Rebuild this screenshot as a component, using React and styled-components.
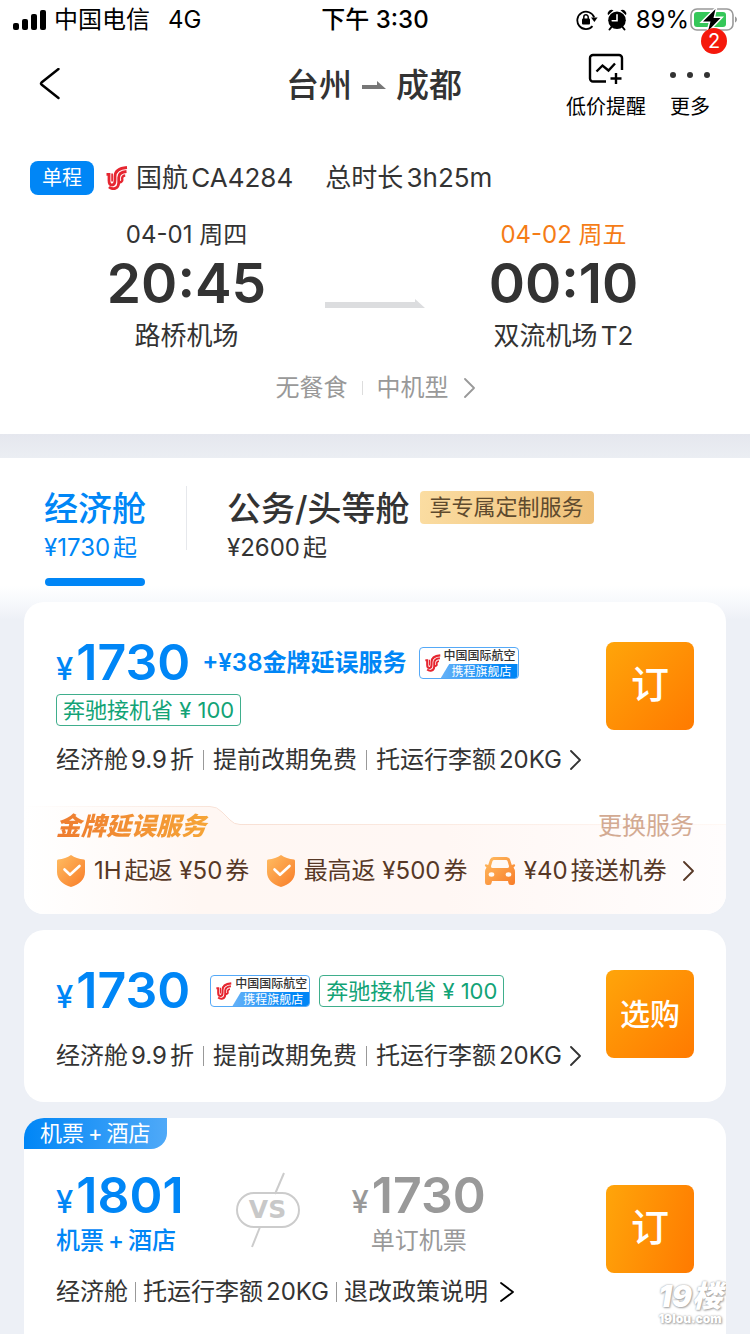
import React from 'react';
import styled, { createGlobalStyle, css } from 'styled-components';

const GlobalStyle = createGlobalStyle`
  * {
    box-sizing: border-box;
  }
  body {
    margin: 0;
    background: #edf0f6;
    color: #333;
    font-family: Inter, 'Noto Sans CJK SC', sans-serif;
    font-size: 24px;
    text-autospace: normal;
  }
  button {
    margin: 0;
    padding: 0;
    border: 0;
    background: none;
    color: inherit;
    font: inherit;
    text-autospace: inherit;
    white-space: nowrap;
    cursor: pointer;
  }
  svg {
    display: block;
    flex: none;
  }
`;

const Page = styled.div`
  display: flex;
  flex-direction: column;
  min-height: 100vh;
  overflow: hidden;
  white-space: nowrap;
`;

/* status bar */

const StatusBar = styled.div`
  display: grid;
  grid-template-columns: 1fr auto 1fr;
  align-items: center;
  height: 40px;
  padding: 0 12px;
  background: #fff;
  color: #000;
  line-height: 40px;
`;

const StatusGroup = styled.div`
  display: flex;
  align-items: center;
  gap: ${props => props.$gap}px;
  justify-content: ${props => (props.$end ? 'flex-end' : 'flex-start')};
`;

const Carrier = styled.span`
  margin-right: 10px;
`;

const Clock = styled.span`
  font-weight: 500;
`;

/* header */

const Header = styled.header`
  background: #fff;
  padding-bottom: 30px;
`;

const NavBar = styled.nav`
  display: grid;
  grid-template-columns: 1fr auto 1fr;
  align-items: center;
  height: 90px;
  padding: 0 40px 0 38px;
`;

const BackButton = styled.button`
  justify-self: start;
  color: #000;
`;

const Title = styled.h1`
  display: flex;
  align-items: center;
  gap: 10px;
  margin: 0;
  font-size: 33px;
  font-weight: 500;
  line-height: 44px;
`;

const Actions = styled.div`
  display: flex;
  align-items: flex-start;
  justify-self: end;
  gap: 24px;
  padding-top: 4px;
`;

const Action = styled.button`
  position: relative;
  display: flex;
  flex-direction: column;
  align-items: center;
  color: #000;
  font-size: 20px;
  line-height: 32px;
`;

const ActionIcon = styled.span`
  display: flex;
  align-items: ${props => (props.$low ? 'flex-end' : 'center')};
  height: 40px;
  padding-bottom: ${props => (props.$low ? 12 : 4)}px;
`;

const CountBadge = styled.span`
  position: absolute;
  top: -23px;
  left: 31px;
  width: 26px;
  border-radius: 13px;
  background: #f5190c;
  color: #fff;
  line-height: 26px;
  text-align: center;
`;

const FlightRow = styled.div`
  display: flex;
  align-items: center;
  margin-top: 30px;
  padding: 0 30px;
  font-size: 26px;
  line-height: 36px;
`;

const TripTag = styled.span`
  margin-right: 12px;
  padding: 0 12px;
  border-radius: 8px;
  background: #0086f6;
  color: #fff;
  font-size: 20px;
  line-height: 34px;
`;

const FlightNo = styled.span`
  margin: 0 32px 0 8px;
`;

const Route = styled.div`
  display: grid;
  grid-template-columns: 1fr 100px 1fr;
  margin-top: 23px;
  padding: 0 48px;
`;

const RouteArrow = styled.div`
  display: flex;
  align-items: flex-end;
  height: 89px;
`;

const Stop = styled.div`
  display: flex;
  flex-direction: column;
  align-items: center;
`;

const StopDate = styled.span`
  color: ${props => (props.$nextDay ? '#f57c16' : '#333')};
  font-size: 24px;
  line-height: 32px;
`;

const StopTime = styled.span`
  font-size: 55px;
  font-weight: 600;
  line-height: 64px;
`;

const StopAirport = styled.span`
  font-size: 26px;
  line-height: 42px;
`;

const PlaneInfo = styled.button`
  display: flex;
  align-items: center;
  margin: 15px auto 0;
  color: #999;
  line-height: 32px;
`;

const Divider = styled.span`
  flex: none;
  width: 1px;
  height: ${props => props.$height || 20}px;
  margin: 0 ${props => props.$gap}px;
  background: ${props => props.$color || '#999'};
`;

const Strip = styled.div`
  height: 24px;
  background: linear-gradient(#e5e7ee, #ebeef3);
`;

/* cabin tabs */

const Tabs = styled.div`
  display: flex;
  padding: 28px 44px 0;
  height: 144px;
  background: linear-gradient(#fff 128px, #f7f9fc 144px);
`;

const Tab = styled.button`
  display: flex;
  flex-direction: column;
  align-items: flex-start;
  color: ${props => (props.$active ? '#0086f6' : '#333')};
`;

const TabTitle = styled.span`
  display: flex;
  align-items: center;
  gap: 10px;
  font-size: 34px;
  font-weight: 500;
  line-height: 46px;
`;

const TabPrice = styled.span`
  line-height: 32px;
`;

const TabLine = styled.span`
  align-self: center;
  width: 100px;
  height: 8px;
  margin-top: 14px;
  border-radius: 4px;
  background: #0086f6;
`;

const PerkTag = styled.span`
  margin-bottom: 4px;
  padding: 0 10px;
  border-radius: 4px;
  background: linear-gradient(100deg, #fbdda2, #efc078);
  color: #5e4a2e;
  font-size: 22px;
  font-weight: 400;
  line-height: 33px;
`;

/* fare cards */

const Fares = styled.main`
  display: flex;
  flex: 1;
  flex-direction: column;
  gap: 16px;
  padding: 0 24px;
  background: linear-gradient(#f7f9fc, #edf0f6 18px);
`;

const Card = styled.section`
  position: relative;
  border-radius: 20px;
  background: #fff;
  overflow: hidden;
  ${props =>
    props.$last &&
    css`
      flex: 1;
      border-radius: 20px 20px 0 0;
    `}
`;

const CardBody = styled.div`
  display: flex;
  justify-content: space-between;
  align-items: flex-start;
  padding: ${props => props.$top}px 32px ${props => props.$bottom}px;
`;

const FareInfo = styled.div`
  display: flex;
  flex-direction: column;
  align-items: flex-start;
`;

const PriceRow = styled.div`
  display: flex;
  align-items: center;
  height: 50px;
`;

const Price = styled.span`
  display: flex;
  align-items: baseline;
  gap: 3px;
  height: 54px;
  padding-top: 1px;
  color: ${props => (props.$muted ? '#999' : '#0086f6')};
  font-size: 50px;
  font-weight: 600;
  line-height: 50px;
`;

const Yen = styled.small`
  font-size: 31px;
  font-weight: 500;
`;

const AddOn = styled.span`
  margin: 0 12px;
  color: #0086f6;
  font-weight: 600;
  line-height: 32px;
  text-autospace: no-autospace;
`;

const TagRow = styled.div`
  display: flex;
  align-items: center;
  gap: 9px;
  margin: ${props => (props.$inline ? '0 0 0 20px' : '6px 0 0')};
`;

const SaveTag = styled.span`
  padding: 0 6px;
  border: 1px solid #3fae8c;
  border-radius: 4px;
  color: #12a376;
  font-size: 22px;
  line-height: 30px;
`;

const Details = styled.button`
  display: flex;
  align-items: center;
  margin-top: ${props => props.$top}px;
  line-height: 34px;
`;

const ChevronSlot = styled.span`
  margin-left: ${props => props.$gap}px;
`;

const BookButton = styled.button`
  width: 88px;
  height: 88px;
  margin-top: ${props => props.$top || 4}px;
  padding-bottom: ${props => (props.$small ? 0 : 4)}px;
  border-radius: 8px;
  background: linear-gradient(${props => props.$angle || 135}deg, #ffa50a, #ff7a00);
  color: #fff;
  font-size: ${props => (props.$small ? 30 : 38)}px;
  font-weight: 500;
  line-height: 84px;
`;

/* airline store badge */

const StoreBox = styled.span`
  display: flex;
  align-items: center;
  justify-content: space-between;
  width: 100px;
  height: 32px;
  padding: 0 2px 0 5px;
  border: 1px solid #55a9f7;
  border-radius: 4px;
  overflow: hidden;
`;

const StoreNames = styled.span`
  display: flex;
  flex-direction: column;
  align-items: flex-end;
  font-size: 12px;
  font-weight: 500;
  line-height: 16px;
`;

const StoreShop = styled.span`
  width: 77px;
  margin-right: -2px;
  padding-right: 6px;
  background: linear-gradient(90deg, #66b2f8, #0086f6 80%);
  clip-path: polygon(9px 0, 100% 0, 100% 100%, 0 100%);
  color: #fff;
  font-weight: 400;
  line-height: 15px;
  text-align: right;
`;

/* delay service */

const Service = styled.div`
  position: relative;
  height: 108px;
  padding: 4px 32px 0;
`;

const ServiceShape = styled.svg`
  position: absolute;
  top: 0;
  left: 0;
  width: 100%;
  height: 108px;
`;

const ServiceHead = styled.div`
  position: relative;
  display: flex;
  align-items: center;
  justify-content: space-between;
  height: 32px;
`;

const ServiceName = styled.h2`
  margin: 0;
  padding-right: 6px;
  background: linear-gradient(90deg, #ee7c30, #f6a637);
  background-clip: text;
  color: transparent;
  font-size: 25px;
  font-style: italic;
  font-weight: 900;
  line-height: 32px;
`;

const ChangeButton = styled.button`
  color: #d3aa92;
  line-height: 32px;
`;

const ServiceItems = styled.button`
  position: relative;
  display: flex;
  align-items: center;
  justify-content: space-between;
  width: 100%;
  margin-top: 12px;
  color: #573826;
  line-height: 34px;
`;

const ServiceItem = styled.span`
  display: flex;
  align-items: center;
  gap: 8px;
`;

/* hotel bundle */

const Ribbon = styled.span`
  display: block;
  width: fit-content;
  padding: 0 16px;
  border-bottom-right-radius: 16px;
  background: linear-gradient(90deg, #0086f6, #4fa9f8);
  color: #fff;
  font-size: 22px;
  line-height: 31px;
`;

const BundleName = styled.span`
  display: flex;
  gap: 4px;
`;

const Compare = styled.div`
  display: flex;
  align-items: center;
`;

const Option = styled.div`
  display: flex;
  flex-direction: column;
  align-items: ${props => (props.$muted ? 'center' : 'flex-start')};
`;

const OptionName = styled.span`
  margin-top: 2px;
  color: ${props => (props.$muted ? '#999' : '#0086f6')};
  font-weight: ${props => (props.$muted ? 400 : 500)};
  line-height: 32px;
`;

const Versus = styled.div`
  position: relative;
  width: 64px;
  margin: 0 52px 6px;
  border: 2px solid #ccc;
  border-radius: 18px;
  color: #c8c8c8;
  font-family: 'DejaVu Sans', sans-serif;
  font-size: 25px;
  font-weight: 700;
  line-height: 32px;
  text-align: center;
`;

const Slash = styled.svg`
  position: absolute;
  top: -22px;
  left: 10px;
`;

const Watermark = styled.div`
  position: absolute;
  right: 4px;
  bottom: 8px;
  display: flex;
  flex-direction: column;
  align-items: center;
  color: #fff;
  font-weight: 900;
  text-shadow: 0 0 2px #999, 1px 1px 2px #aaa;
  text-autospace: no-autospace;
`;

const WatermarkTop = styled.span`
  font-size: 30px;
  font-style: italic;
  line-height: 30px;
`;

const WatermarkUrl = styled.span`
  font-size: 12px;
  line-height: 16px;
`;

/* icons */

const Chevron = ({ width = 11, color = 'currentColor' }) => (
  <svg width={width} height="20" viewBox={`0 0 ${width} 20`} fill="none">
    <path
      d={`M1 1L${width - 1} 10L1 19`}
      stroke={color}
      strokeWidth="1.8"
      strokeLinecap="round"
      strokeLinejoin="round"
    />
  </svg>
);

const SignalIcon = () => (
  <svg width="34" height="22" viewBox="0 0 34 22">
    <rect x="1" y="14" width="6" height="7" rx="2" />
    <rect x="10" y="10" width="6" height="11" rx="2" />
    <rect x="19" y="5" width="6" height="16" rx="2" />
    <rect x="28" y="1" width="6" height="20" rx="2" />
  </svg>
);

const LockIcon = () => (
  <svg width="22" height="22" viewBox="0 0 22 22" fill="none" stroke="#000">
    <path d="M16.5 17.2A8.7 8.7 0 1 1 18.2 8.4" strokeWidth="1.8" />
    <path d="M15 8.5H21.6L18.4 13Z" fill="#000" stroke="none" />
    <rect x="6" y="9.5" width="8" height="6" rx="1" fill="#000" stroke="none" />
    <path d="M7.8 10V8a2.2 2.2 0 0 1 4.4 0V10" strokeWidth="1.5" />
  </svg>
);

const AlarmIcon = () => (
  <svg width="20" height="22" viewBox="0 0 20 22" fill="#000">
    <path d="M1 6.2A4 4 0 0 1 6.5 1.2ZM19 6.2A4 4 0 0 0 13.5 1.2Z" />
    <circle cx="10" cy="11.3" r="8.8" />
    <path d="M4.5 18L2.5 20.5M15.5 18L17.5 20.5" stroke="#000" strokeWidth="2" strokeLinecap="round" />
    <path d="M10 5.8V11.8H5.2" fill="none" stroke="#fff" strokeWidth="1.6" strokeLinecap="round" />
  </svg>
);

const BatteryIcon = () => (
  <svg width="48" height="26" viewBox="0 0 48 26">
    <rect x="1" y="2" width="42" height="21" rx="6" fill="none" stroke="#999" strokeWidth="1.6" />
    <rect x="4" y="5" width="32" height="15" rx="3" fill="#35c759" />
    <path d="M45 9.5C47.6 10.4 47.6 14.6 45 15.5Z" fill="#999" />
    <path
      d="M25.5 2L13 14.5H20.5L18 24L30.5 11H23.5Z"
      fill="#000"
      stroke="#fff"
      strokeWidth="3"
      paintOrder="stroke"
    />
  </svg>
);

const TrendIcon = () => (
  <svg width="36" height="32" viewBox="0 0 36 32" fill="none" stroke="#000" strokeWidth="2.4">
    <path d="M18 28.5H5A3 3 0 0 1 2 25.5V5A3 3 0 0 1 5 2H31A3 3 0 0 1 34 5V17" />
    <path d="M8.5 18.5L14.5 12.5L20.5 17.5L27 10.5" />
    <path d="M28 20V31M22.5 25.5H33.5" />
  </svg>
);

const DotsIcon = () => (
  <svg width="40" height="8" viewBox="0 0 40 8" fill="#333">
    <circle cx="3" cy="4" r="3" />
    <circle cx="20" cy="4" r="3" />
    <circle cx="37" cy="4" r="3" />
  </svg>
);

const PhoenixLogo = ({ size = 22 }) => (
  <svg width={size} height={size + 2} viewBox="0 0 22 24" fill="none" stroke="#e62630">
    <path
      d="M0.5 8.3H3V14.5C3 17.5 4.2 19 6 19C8.5 19 9 16.5 9 14V10.5C9 5 12.5 2.2 21 1.5"
      strokeWidth="2.8"
    />
    <path d="M6.1 7.5V15.5" strokeWidth="1.7" />
    <path d="M3 21C6.5 24 12.5 23 12.7 17V11.5C12.7 7.8 15 6 20.5 5.5" strokeWidth="2.8" />
    <path d="M13 15.5C14.5 17 16.8 15.5 16.3 13.5C15.8 11.5 16.5 9.8 19.2 9.5" strokeWidth="2.4" />
  </svg>
);

const ShieldIcon = () => (
  <svg width="30" height="34" viewBox="0 0 30 34">
    <defs>
      <linearGradient id="shield" x1="0" y1="0" x2="1" y2="1">
        <stop offset="0" stopColor="#ffbd62" />
        <stop offset="1" stopColor="#f87c28" />
      </linearGradient>
    </defs>
    <path
      d="M15 1C18.5 3.5 23 5 28 5.5Q29 5.7 29 7V18C29 25.5 23 30.5 15 33C7 30.5 1 25.5 1 18V7Q1 5.7 2 5.5C7 5 11.5 3.5 15 1Z"
      fill="url(#shield)"
    />
    <path
      d="M8.5 15.5L14 20.8L23.5 12"
      fill="none"
      stroke="#fff"
      strokeWidth="2.6"
      strokeLinecap="round"
      strokeLinejoin="round"
    />
  </svg>
);

const CarIcon = () => (
  <svg width="32" height="30" viewBox="0 0 32 30">
    <path
      d="M9.5 1H22.5Q25 1 26 3.5L27.8 9L30 8.3Q31.5 8.5 31 10L29.5 11.5Q31 13.5 31 16V26Q31 29 28.5 29H27Q24.5 29 24.3 26.5L24 25H8L7.7 26.5Q7.5 29 5 29H3.5Q1 29 1 26V16Q1 13.5 2.5 11.5L1 10Q0.5 8.5 2 8.3L4.2 9L6 3.5Q7 1 9.5 1Z"
      fill="url(#shield)"
    />
    <path d="M10 4H22Q23 4 23.5 5L25 10Q25.3 12 23.5 12H8.5Q6.7 12 7 10L8.5 5Q9 4 10 4Z" fill="#fff9f5" />
    <ellipse cx="7.5" cy="18.5" rx="2.8" ry="2.2" fill="#fff9f5" />
    <ellipse cx="24.5" cy="18.5" rx="2.8" ry="2.2" fill="#fff9f5" />
  </svg>
);

const StoreBadge = () => (
  <StoreBox>
    <PhoenixLogo size={16} />
    <StoreNames>
      <span>中国国际航空</span>
      <StoreShop>携程旗舰店</StoreShop>
    </StoreNames>
  </StoreBox>
);

const FarePrice = ({ amount, muted }) => (
  <Price $muted={muted}>
    <Yen>¥</Yen>
    {amount}
  </Price>
);

const HotelBundle = () => (
  <BundleName>
    <span>机票</span>
    <span>+</span>
    <span>酒店</span>
  </BundleName>
);

const FareDetails = ({ items, top, gap = 9, children }) => (
  <Details type="button" $top={top}>
    {items.map((item, i) => (
      <React.Fragment key={item}>
        {i > 0 && <Divider $gap={gap} />}
        <span>{item}</span>
      </React.Fragment>
    ))}
    {children}
  </Details>
);

const economyDetails = ['经济舱9.9折', '提前改期免费', '托运行李额20KG'];
const bundleDetails = ['经济舱', '托运行李额20KG', '退改政策说明'];

const App = () => (
  <Page>
    <GlobalStyle />
    <StatusBar>
      <StatusGroup $gap={8}>
        <SignalIcon />
        <Carrier>中国电信</Carrier>
        <span>4G</span>
      </StatusGroup>
      <Clock>下午 3:30</Clock>
      <StatusGroup $gap={9} $end>
        <LockIcon />
        <AlarmIcon />
        <StatusGroup $gap={1}>
          <span>89%</span>
          <BatteryIcon />
        </StatusGroup>
      </StatusGroup>
    </StatusBar>

    <Header>
      <NavBar>
        <BackButton type="button" aria-label="返回">
          <svg width="22" height="34" viewBox="0 0 22 34" fill="none">
            <path
              d="M20.5 1L3.5 14.5Q2.5 15.5 3.5 16.5L20.5 30"
              stroke="#000"
              strokeWidth="2.4"
              strokeLinecap="round"
            />
          </svg>
        </BackButton>
        <Title>
          台州
          <svg width="24" height="8" viewBox="0 0 24 8" fill="#777">
            <path d="M0 4H15V0L24 8H0Z" />
          </svg>
          成都
        </Title>
        <Actions>
          <Action type="button">
            <ActionIcon>
              <TrendIcon />
            </ActionIcon>
            低价提醒
          </Action>
          <Action type="button">
            <ActionIcon $low>
              <DotsIcon />
            </ActionIcon>
            更多
            <CountBadge>2</CountBadge>
          </Action>
        </Actions>
      </NavBar>

      <FlightRow>
        <TripTag>单程</TripTag>
        <PhoenixLogo />
        <FlightNo>国航CA4284</FlightNo>
        <span>总时长3h25m</span>
      </FlightRow>

      <Route>
        <Stop>
          <StopDate>04-01 周四</StopDate>
          <StopTime>20:45</StopTime>
          <StopAirport>路桥机场</StopAirport>
        </Stop>
        <RouteArrow>
          <svg width="100" height="9" viewBox="0 0 100 9" fill="#dcdddf">
            <path d="M0 3H90V0L100 9H0Z" />
          </svg>
        </RouteArrow>
        <Stop>
          <StopDate $nextDay>04-02 周五</StopDate>
          <StopTime>00:10</StopTime>
          <StopAirport>双流机场T2</StopAirport>
        </Stop>
      </Route>

      <PlaneInfo type="button">
        无餐食
        <Divider $height={14} $gap={14} $color="#ddd" />
        中机型
        <ChevronSlot $gap={15}>
          <Chevron />
        </ChevronSlot>
      </PlaneInfo>
    </Header>

    <Strip />

    <Tabs role="tablist">
      <Tab type="button" role="tab" aria-selected="true" $active>
        <TabTitle>经济舱</TabTitle>
        <TabPrice>¥1730起</TabPrice>
        <TabLine />
      </Tab>
      <Divider $height={64} $gap={40} $color="#e6e8ec" />
      <Tab type="button" role="tab" aria-selected="false">
        <TabTitle>
          公务/头等舱
          <PerkTag>享专属定制服务</PerkTag>
        </TabTitle>
        <TabPrice>¥2600起</TabPrice>
      </Tab>
    </Tabs>

    <Fares>
      <Card>
        <CardBody $top={36} $bottom={29}>
          <FareInfo>
            <PriceRow>
              <FarePrice amount="1730" />
              <AddOn>+¥38金牌延误服务</AddOn>
              <StoreBadge />
            </PriceRow>
            <TagRow>
              <SaveTag>奔驰接机省 ¥ 100</SaveTag>
            </TagRow>
            <FareDetails items={economyDetails} top={17}>
              <ChevronSlot $gap={8}>
                <Chevron />
              </ChevronSlot>
            </FareDetails>
          </FareInfo>
          <BookButton type="button">订</BookButton>
        </CardBody>
        <Service>
          <ServiceShape viewBox="0 0 702 108" preserveAspectRatio="none">
            <defs>
              <linearGradient id="serviceFill" x1="0" y1="0" x2="1" y2="0">
                <stop offset="0" stopColor="#fff" />
                <stop offset="0.25" stopColor="#fff7f3" />
                <stop offset="0.6" stopColor="#fff7f4" />
                <stop offset="1" stopColor="#fffdfd" />
              </linearGradient>
              <linearGradient id="serviceLine" x1="0" y1="0" x2="1" y2="0">
                <stop offset="0" stopColor="#fff" />
                <stop offset="0.3" stopColor="#f8e0d4" />
                <stop offset="1" stopColor="#fff8f4" />
              </linearGradient>
            </defs>
            <path d="M0 0.5H186Q193 0.5 198 6L206 14Q210 18.5 216 18.5H702V108H0Z" fill="url(#serviceFill)" />
            <path
              d="M0 0.5H186Q193 0.5 198 6L206 14Q210 18.5 216 18.5L702 18.6"
              fill="none"
              stroke="url(#serviceLine)"
            />
          </ServiceShape>
          <ServiceHead>
            <ServiceName>金牌延误服务</ServiceName>
            <ChangeButton type="button">更换服务</ChangeButton>
          </ServiceHead>
          <ServiceItems type="button">
            <ServiceItem>
              <ShieldIcon />
              1H起返 ¥50券
            </ServiceItem>
            <ServiceItem>
              <ShieldIcon />
              最高返 ¥500券
            </ServiceItem>
            <ServiceItem>
              <CarIcon />
              ¥40接送机券
            </ServiceItem>
            <Chevron />
          </ServiceItems>
        </Service>
      </Card>

      <Card>
        <CardBody $top={36} $bottom={29}>
          <FareInfo>
            <PriceRow>
              <FarePrice amount="1730" />
              <TagRow $inline>
                <StoreBadge />
                <SaveTag>奔驰接机省 ¥ 100</SaveTag>
              </TagRow>
            </PriceRow>
            <FareDetails items={economyDetails} top={23}>
              <ChevronSlot $gap={8}>
                <Chevron />
              </ChevronSlot>
            </FareDetails>
          </FareInfo>
          <BookButton type="button" $small>
            选购
          </BookButton>
        </CardBody>
      </Card>

      <Card $last>
        <Ribbon>
          <HotelBundle />
        </Ribbon>
        <CardBody $top={20} $bottom={26}>
          <FareInfo>
            <Compare>
              <Option>
                <FarePrice amount="1801" />
                <OptionName>
                  <HotelBundle />
                </OptionName>
              </Option>
              <Versus>
                <Slash width="40" height="76" viewBox="0 0 40 76" fill="none">
                  <path d="M36 1L27 22" stroke="#ccc" strokeWidth="2" />
                  <path d="M12 55L4 75" stroke="#ccc" strokeWidth="2" />
                </Slash>
                VS
              </Versus>
              <Option $muted>
                <FarePrice amount="1730" muted />
                <OptionName $muted>单订机票</OptionName>
              </Option>
            </Compare>
            <FareDetails items={bundleDetails} top={18} gap={7}>
              <ChevronSlot $gap={12}>
                <Chevron width={14} color="#000" />
              </ChevronSlot>
            </FareDetails>
          </FareInfo>
          <BookButton type="button" $top={16} $angle={105}>
            订
          </BookButton>
        </CardBody>
        <Watermark>
          <WatermarkTop>19楼</WatermarkTop>
          <WatermarkUrl>19lou.com</WatermarkUrl>
        </Watermark>
      </Card>
    </Fares>
  </Page>
);

export default App;
